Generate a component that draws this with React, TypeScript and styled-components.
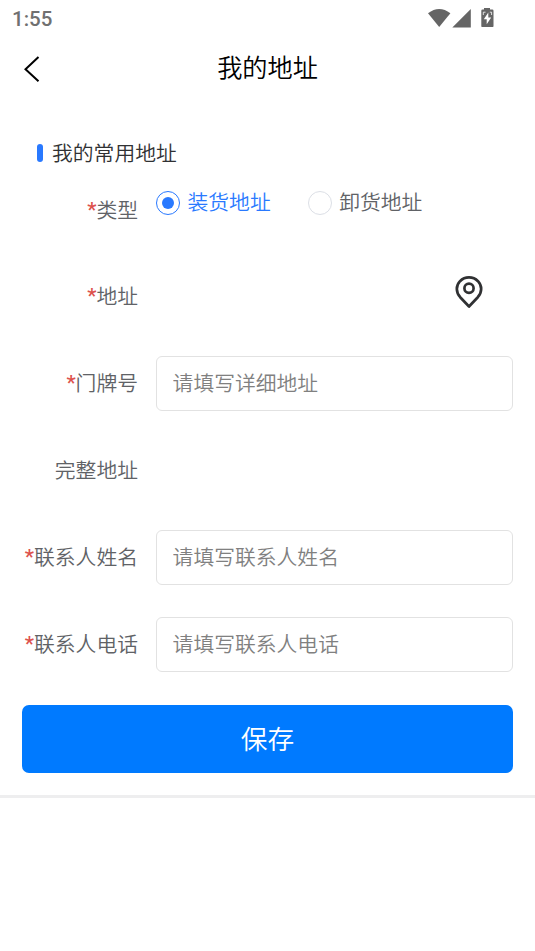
import React, { useState } from 'react';
import styled, { createGlobalStyle } from 'styled-components';

const GlobalStyle = createGlobalStyle`
  * { box-sizing: border-box; }
  body {
    margin: 0;
    background: #fff;
    font-family: Roboto, "Noto Sans CJK SC", sans-serif;
    font-weight: 350;
  }
`;

const Page = styled.div`
  height: 951px;
  overflow: hidden;
  background: #fff;
`;

const StatusBar = styled.header`
  display: flex;
  align-items: center;
  justify-content: space-between;
  height: 37px;
  padding: 0 40px 0 12px;
`;

const Clock = styled.span`
  font-size: 20.5px;
  font-weight: 500;
  line-height: 24px;
  color: #707070;
  padding-top: 1px;
`;

const StatusIcons = styled.svg`
  display: block;
  color: #656565;
`;

const NavBar = styled.nav`
  display: grid;
  grid-template-columns: 64px 1fr 64px;
  align-items: center;
  height: 63px;
`;

const BackButton = styled.button`
  display: flex;
  height: 63px;
  padding: 18px 0 0 23px;
  border: 0;
  background: none;
`;

const Title = styled.h1`
  margin: 0;
  text-align: center;
  font-size: 25.2px;
  font-weight: 350;
  line-height: 36px;
  color: #000;
`;

const SectionTitle = styled.h2`
  display: flex;
  align-items: center;
  gap: 9px;
  height: 30px;
  margin: 37px 0 0 37px;
  font-size: 20.8px;
  font-weight: 350;
  color: #303133;

  &::before {
    content: '';
    width: 6px;
    height: 18px;
    margin-top: 2px;
    border-radius: 3px;
    background: #2979ff;
  }
`;

const Form = styled.form`
  margin-top: -0.6px;
  padding: 0 22px 22px;
  border-bottom: 3px solid #eeeeef;
`;

const Row = styled.div`
  display: grid;
  grid-template-columns: 116px 1fr;
  column-gap: 18px;
  align-items: center;
  height: 87px;

  &:first-child { padding-top: 1.5px; }
`;

const Label = styled.label`
  text-align: right;
  white-space: nowrap;
  font-size: 20.8px;
  line-height: 30px;
  color: #606266;
`;

const Star = styled.span`
  display: inline-block;
  line-height: 1;
  transform: translateY(-1px);
  font-weight: 500;
  color: #dd524d;
`;

const Field = styled.input`
  width: 100%;
  height: 55px;
  padding: 0 15px 0 15.6px;
  border: 1.5px solid #e2e2e2;
  border-radius: 6px;
  outline: 0;
  background: #fff;
  font-family: inherit;
  font-weight: inherit;
  font-size: 20.8px;
  color: #303133;

  &::placeholder { color: #808080; opacity: 1; }
`;

const RadioGroup = styled.div`
  display: flex;
  gap: 37px;
  padding-bottom: 15px;
`;

const RadioOption = styled.button<{ $checked: boolean }>`
  display: flex;
  align-items: center;
  gap: 7.5px;
  padding: 0;
  border: 0;
  background: none;
  font-family: inherit;
  font-weight: inherit;
  font-size: 20.8px;
  line-height: 30px;
  color: ${p => (p.$checked ? '#2979ff' : '#606266')};
`;

const RadioMark = styled.span<{ $checked: boolean }>`
  display: grid;
  place-items: center;
  width: 24px;
  height: 24px;
  border: 1.3px solid ${p => (p.$checked ? '#2979ff' : '#dcdfe6')};
  border-radius: 50%;

  &::after {
    content: '';
    width: 12px;
    height: 12px;
    border-radius: 50%;
    background: ${p => (p.$checked ? '#2979ff' : 'transparent')};
  }
`;

const PickLocation = styled.button`
  display: flex;
  justify-self: end;
  margin: 0 29px 9px 0;
  padding: 0;
  border: 0;
  background: none;
`;

const SaveButton = styled.button`
  display: block;
  width: 100%;
  height: 68px;
  margin-top: 16.6px;
  padding: 0 0 4px;
  border: 0;
  border-radius: 7px;
  background: #007aff;
  font-family: inherit;
  font-weight: inherit;
  font-size: 26.7px;
  color: #fff;
`;

function FormRow({ label, required, children }: { label: string; required?: boolean; children?: React.ReactNode }) {
  return (
    <Row>
      <Label>{required && <Star>*</Star>}{label}</Label>
      {children}
    </Row>
  );
}

const kinds = ['装货地址', '卸货地址'];

export default function App() {
  const [kind, setKind] = useState(kinds[0]);

  return (
    <Page>
      <GlobalStyle />
      <StatusBar>
        <Clock>1:55</Clock>
        <StatusIcons width="67" height="22" viewBox="0 0 67 22" fill="currentColor">
          <path d="M0 5.3Q11.2-3.3 22.4 5.3L11.2 19Z" />
          <path d="M42.8 1V19.5H24.3Z" />
          <path d="M56 0h6v1.500h2.3q1.200 0 1.200 1.200v15.200q0 1.200-1.200 1.200H54.500q-1.200 0-1.200-1.200V2.700q0-1.200 1.200-1.200H56Z" />
          <path d="M60.300 4.500 55.800 11.300h2.900v5L63.200 9.500h-2.900Z" fill="#fff" />
          <path d="M55.300 7V4.200h2.200M61.800 4.200h1.800V7" fill="none" stroke="#fff" strokeWidth="0.800" />
        </StatusIcons>
      </StatusBar>
      <NavBar>
        <BackButton type="button" aria-label="返回">
          <svg width="18" height="28" viewBox="0 0 18 28" fill="none" stroke="#000" strokeWidth="2">
            <path d="M15.500 2 2.500 14.200 15.500 26.200" />
          </svg>
        </BackButton>
        <Title>我的地址</Title>
      </NavBar>
      <SectionTitle>我的常用地址</SectionTitle>
      <Form>
        <FormRow label="类型" required>
          <RadioGroup>
            {kinds.map(k => (
              <RadioOption key={k} type="button" $checked={k === kind} onClick={() => setKind(k)}>
                <RadioMark $checked={k === kind} />
                {k}
              </RadioOption>
            ))}
          </RadioGroup>
        </FormRow>
        <FormRow label="地址" required>
          <PickLocation type="button" aria-label="选择位置">
            <svg width="30" height="34" viewBox="0 0 30 34" fill="none" stroke="#303133" strokeWidth="2.700">
              <path d="M15 31.500 6.200 22.200C1.700 17 1.800 10.700 6 6.200A12.600 12.600 0 0 1 24 6.200C28.200 10.700 28.300 17 23.800 22.200Z" strokeLinejoin="round" />
              <circle cx="15" cy="13.200" r="4.600" />
            </svg>
          </PickLocation>
        </FormRow>
        <FormRow label="门牌号" required>
          <Field placeholder="请填写详细地址" />
        </FormRow>
        <FormRow label="完整地址" />
        <FormRow label="联系人姓名" required>
          <Field placeholder="请填写联系人姓名" />
        </FormRow>
        <FormRow label="联系人电话" required>
          <Field placeholder="请填写联系人电话" />
        </FormRow>
        <SaveButton type="button">保存</SaveButton>
      </Form>
    </Page>
  );
}
